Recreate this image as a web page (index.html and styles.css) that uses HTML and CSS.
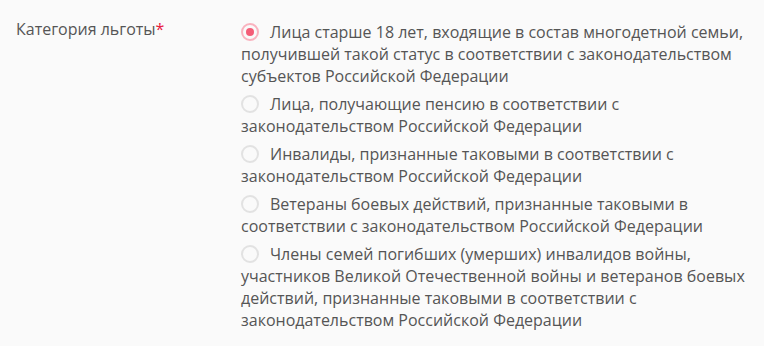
FILE: index.html
```html
<!DOCTYPE html>
<html lang="ru">
<head>
<meta charset="utf-8">
<title>Категория льготы</title>
<link rel="stylesheet" href="styles.css">
</head>
<body>
<div class="field">
  <div class="field-label">Категория льготы<span class="req">*</span></div>
  <div class="options">
    <label class="option"><span class="radio checked"></span>Лица старше 18 лет, входящие в состав многодетной семьи, получившей такой статус в соответствии с законодательством субъектов Российской Федерации</label>
    <label class="option"><span class="radio"></span>Лица, получающие пенсию в соответствии с законодательством Российской Федерации</label>
    <label class="option"><span class="radio"></span>Инвалиды, признанные таковыми в соответствии с законодательством Российской Федерации</label>
    <label class="option"><span class="radio"></span>Ветераны боевых действий, признанные таковыми в соответствии с законодательством Российской Федерации</label>
    <label class="option"><span class="radio"></span>Члены семей погибших (умерших) инвалидов войны, участников Великой Отечественной войны и ветеранов боевых действий, признанные таковыми в соответствии с законодательством Российской Федерации</label>
  </div>
</div>
</body>
</html>
```

FILE: styles.css
```css
html, body {
  margin: 0;
  padding: 0;
  background: #fafafa;
}
body {
  font-family: "Open Sans", "Liberation Sans", sans-serif;
  font-size: 16px;
  line-height: 22px;
  color: #555555;
}
.field {
  display: flex;
  padding: 18px 8px 0 16px;
}
.field-label {
  width: 225px;
  flex: none;
}
.req {
  color: #e8173f;
}
.options {
  flex: 1;
  display: flex;
  flex-direction: column;
  gap: 6px;
  padding-top: 3px;
}
.option {
  display: block;
}
.radio {
  display: inline-block;
  box-sizing: border-box;
  width: 18px;
  height: 18px;
  border: 2px solid #e2e2e2;
  border-radius: 50%;
  background: #fafafa;
  vertical-align: middle;
  margin: -3px 11px 0 0;
  position: relative;
}
.radio.checked {
  border-color: #f9b3bf;
}
.radio.checked::after {
  content: "";
  position: absolute;
  left: 3px;
  top: 3px;
  width: 8px;
  height: 8px;
  border-radius: 50%;
  background: #f45d77;
}
```
